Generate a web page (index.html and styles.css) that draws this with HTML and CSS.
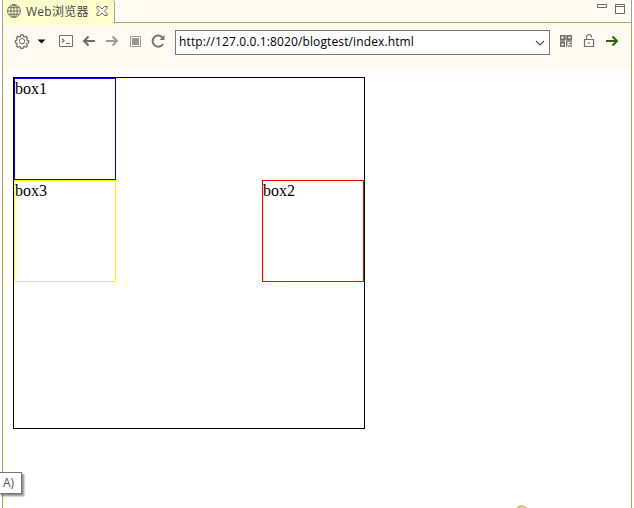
FILE: index.html
```html
<!DOCTYPE html>
<html lang="zh-CN">
<head>
<meta charset="utf-8">
<title>Web浏览器</title>
<link rel="stylesheet" href="styles.css">
</head>
<body>
<div class="window">
  <header class="tabs">
    <div class="tab">
      <svg class="globe" width="14" height="14" viewBox="0 0 14 14"><circle cx="7" cy="7" r="6.4"/><ellipse cx="7" cy="7" rx="3.2" ry="6.4"/><path d="M7 .6v12.8M.6 7h12.8M1.6 3.7h10.8M1.6 10.3h10.8"/></svg>
      <span class="tab-title">Web浏览器</span>
      <svg class="close" width="12" height="12" viewBox="0 0 12 12"><path d="M1 1.500h2.500L6 4l2.500-2.500H11v2L8.500 6 11 8.500v2H8.500L6 8l-2.500 2.500H1v-2L3.500 6 1 3.500z"/></svg>
    </div>
    <div class="tab-rest">
      <svg width="29" height="12" viewBox="0 0 29 12"><path d="M.5 1.500h9v3h-9zM18.500 1.500h9v9h-9zM18.500 3.500h9"/></svg>
    </div>
  </header>
  <main class="panel">
    <nav class="toolbar">
      <svg class="tools" width="170" height="24" viewBox="0 0 170 24">
        <g class="dark">
          <path class="gear" d="M15.700 4.800h2.600l.4 1.900 1.300.6 1.700-1 1.700 1.700-1 1.700.6 1.300 1.600.4v2.400l-1.700.4-.6 1.300 1 1.700-1.700 1.700-1.700-1-1.300.6-.4 1.500h-2.500l-.4-1.600-1.300-.6-1.700 1-1.700-1.700 1-1.700-.6-1.300-1.500-.4v-2.400l1.600-.4.6-1.300-1-1.700 1.700-1.700 1.700 1 1.300-.6z"/>
          <circle cx="17" cy="11.200" r="2.700"/>
          <path d="M54.500 5.500h13v11h-13z"/>
          <path class="prompt" d="M57 8.500l2 2-2 2M61 13.500h4"/>
        </g>
        <path class="caret" d="M32.500 9.500h8l-4 4z"/>
        <path class="back" d="M90 11H79M83.500 6.500l-4.500 4.500 4.500 4.500"/>
        <path class="forward" d="M101 11h11M107.500 6.500l4.500 4.500-4.500 4.500"/>
        <path class="stop" d="M125.500 6.500h10v10h-10z"/><path class="stop-core" d="M127 8h7v7h-7z"/>
        <path class="reload" d="M157.500 7.500A5.600 5.600 0 1 0 158 14"/><path class="reload-tip" d="M159.500 5v5h-5z"/>
      </svg>
      <div class="address">
        <span class="url">http://127.0.0.1:8020/blogtest/index.html</span>
        <svg width="10" height="6" viewBox="0 0 10 6"><path d="M1 1l4 4 4-4"/></svg>
      </div>
      <svg class="actions" width="64" height="24" viewBox="0 0 64 24">
        <path class="qr" d="M.7 5.700h3.600v3.600H.7zM7.700 5.700h3.600v3.600H7.700zM.7 12.700h3.600v3.600H.7zM6 5v5M0 11h5M6 11h6M6.700 12v4.500M9 13.500h3M8 16h1.500M11 15v2"/>
        <path class="lock" d="M24.500 9.500h9v7h-9zM26.500 9.500V7a2.500 2.500 0 0 1 5 0v.5M29 12v2"/>
        <path class="go" d="M46 11h11M52.500 6.500l4.500 4.500-4.500 4.500"/>
      </svg>
    </nav>
    <section class="page">
      <div class="container">
        <div class="box blue">box1</div>
        <div class="box yellow">box3</div>
        <div class="box red">box2</div>
      </div>
    </section>
  </main>
</div>
<div class="tip">A)</div>
<div class="mark"></div>
</body>
</html>
```
FILE: styles.css
```css
* { box-sizing: border-box; }
body { margin: 0; height: 508px; overflow: hidden; position: relative; background: #fff; }
svg { display: block; fill: none; flex: none; }
.window { height: 508px; margin: 0 2px; border: solid #a0a0a0; border-width: 0 1px; display: flex; flex-direction: column; background: #ffc; }
.tabs { height: 23px; display: flex; flex: none; }
.tab { width: 112px; height: 23px; background: #ffc; border-right: 1px solid #a0a0a0; border-top-right-radius: 3px; display: flex; align-items: center; padding-left: 4px; }
.tab-title { width: 66px; margin-left: 5px; color: #42444c; font: 12px/20px "Open Sans", "Noto Sans CJK SC", sans-serif; white-space: nowrap; letter-spacing: .25px; }
.globe { stroke: #6f6f62; stroke-width: 1; margin-top: -1px; }
.close { stroke: #66665c; stroke-width: 1; margin-left: 4px; margin-top: -2px; fill: #fffff4; }
.tab-rest { flex: 1; background: #fffbf3; border-bottom: 1px solid #a0a0a0; display: flex; justify-content: flex-end; padding: 3px 5px 0 0; }
.tab-rest svg { stroke: #686868; }
.panel { flex: 1; margin: 0 2px; padding-top: 2px; display: flex; flex-direction: column; }
.toolbar { height: 44px; background: #fffbf3; display: flex; align-items: flex-start; padding-top: 5px; }
.dark { stroke: #707070; }
.gear { transform: translate(2px, .7px) scale(.88); stroke-width: 1.400; }
.prompt { stroke-width: 1.200; }
.caret { fill: #111; }
.back { stroke: #6b6b6b; stroke-width: 2; }
.forward { stroke: #9b9b9b; stroke-width: 2; }
.stop { stroke: #999; }
.stop-core { fill: #999; }
.reload { stroke: #777; stroke-width: 2; }
.reload-tip { fill: #777; }
.address { width: 375px; height: 25px; border: 1px solid #7a7a7a; background: #fff; display: flex; align-items: center; justify-content: space-between; padding: 0 4px 0 3px; }
.url { font: 12px/20px "Open Sans", sans-serif; color: #000; letter-spacing: .12px; white-space: nowrap; margin-top: -2px; }
.address svg { stroke: #555; stroke-width: 1.200; }
.actions { margin-left: 10px; }
.qr { stroke: #707070; stroke-width: 1.400; }
.lock { stroke: #707070; stroke-width: 1.200; }
.go { stroke: #29680d; stroke-width: 2; }
.page { flex: 1; background: #fff; padding: 8px; }
.container { width: 352px; height: 352px; border: 1px solid #000; display: grid; grid-template-columns: 102px 102px; grid-template-rows: 102px 102px; justify-content: space-between; align-content: start; }
.box { border: 1px solid; font: 16px/18px "Liberation Serif", serif; padding-top: 1px; color: #000; }
.blue { border-color: #00f; grid-area: 1 / 1; }
.yellow { border-color: #ff0; grid-area: 2 / 1; }
.red { border-color: #f00; grid-area: 2 / 2; }
.tip { position: absolute; left: -1px; top: 472px; width: 23px; height: 22px; padding-left: 3px; border: 1px solid #767676; background: #fff; box-shadow: 2px 2px 2px #0007; color: #575757; font: 12px/20px "Open Sans", sans-serif; }
.mark { position: absolute; left: 515px; top: 505px; width: 13px; height: 13px; border: 2px solid #d5bd83; border-radius: 50%; background: #f5d389; }
```
